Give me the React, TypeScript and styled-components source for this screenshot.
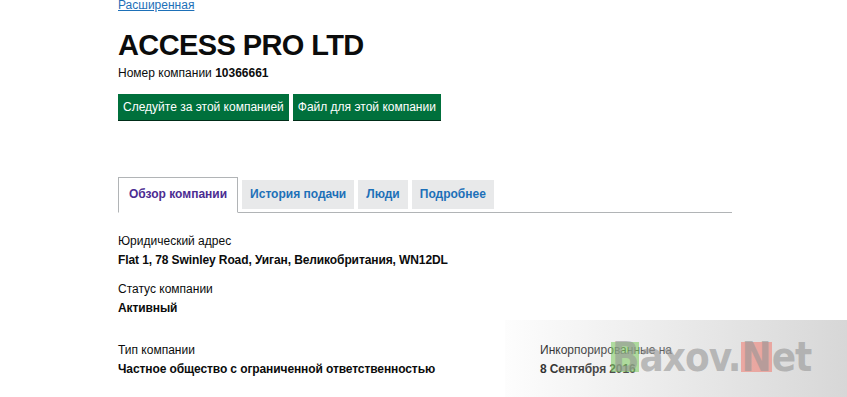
import { styled, createGlobalStyle } from "styled-components";

const GlobalStyle = createGlobalStyle`
  body {
    margin: 0;
    background: #fff;
    font-family: "Liberation Sans", Arial, sans-serif;
    color: #0b0c0c;
  }
`;

const Page = styled.div`
  position: relative;
  width: 847px;
  height: 397px;
  overflow: hidden;
`;

const Content = styled.div`
  width: 614px;
  padding-left: 118px;
`;

const TopLink = styled.a`
  display: block;
  margin-top: -2px;
  font-size: 12px;
  line-height: 14px;
  color: #1d70b8;
  text-decoration: underline;
`;

const Title = styled.h1`
  margin: 16px 0 0;
  font-size: 29px;
  line-height: 34px;
  font-weight: 700;
  letter-spacing: -0.6px;
`;

const CompanyNumber = styled.p`
  margin: 3px 0 0;
  font-size: 12px;
  line-height: 16px;
  strong {
    font-weight: 700;
  }
`;

const Actions = styled.div`
  display: flex;
  gap: 4px;
  margin-top: 13px;
`;

const GreenButton = styled.button`
  height: 26px;
  padding: 0 5px;
  border: 0;
  background: #00703c;
  box-shadow: 0 1px 0 #002d18;
  color: #fff;
  font-family: inherit;
  font-size: 12px;
`;

const Tabs = styled.div`
  display: flex;
  align-items: flex-end;
  gap: 4px;
  margin-top: 57px;
  border-bottom: 1px solid #b1b4b6;
`;

const Tab = styled.div<{ $active?: boolean }>`
  padding: ${(p) => (p.$active ? "9px 10px 10px" : "7px 8px")};
  margin-bottom: ${(p) => (p.$active ? "-1px" : "3px")};
  background: ${(p) => (p.$active ? "#fff" : "#e8e9ea")};
  border: ${(p) => (p.$active ? "1px solid #b1b4b6" : "0")};
  border-bottom: ${(p) => (p.$active ? "1px solid #fff" : "0")};
  color: ${(p) => (p.$active ? "#4c2c92" : "#1d70b8")};
  font-size: 12px;
  line-height: 15px;
  font-weight: 700;
  white-space: nowrap;
`;

const Details = styled.div`
  margin-top: 20px;
`;

const Row = styled.div<{ $gap?: number }>`
  display: grid;
  grid-template-columns: 422px 1fr;
  margin-top: ${(p) => p.$gap ?? 0}px;
`;

const Field = styled.div``;

const Label = styled.div`
  font-size: 12px;
  line-height: 16px;
`;

const Value = styled.div`
  margin-top: 3px;
  font-size: 12px;
  line-height: 16px;
  font-weight: 700;
  letter-spacing: -0.1px;
  white-space: nowrap;
`;

const Watermark = styled.div`
  position: absolute;
  left: 505px;
  top: 320px;
  width: 342px;
  height: 77px;
  background: linear-gradient(90deg, rgba(235, 235, 235, 0.1), rgba(205, 205, 205, 0.8));
  display: flex;
  align-items: center;
  padding-left: 106px;
  box-sizing: border-box;
`;

const MarkText = styled.div`
  display: flex;
  margin-top: -4px;
  font-family: "DejaVu Sans Condensed", "DejaVu Sans", sans-serif;
  font-weight: 700;
  font-size: 40px;
  line-height: 30px;
  color: rgba(150, 150, 150, 0.6);
  letter-spacing: -1px;
`;

const MarkLetter = styled.span<{ $bg: string }>`
  background: ${(p) => p.$bg};
  padding: 0 1px;
`;

export default function App() {
  return (
    <Page>
      <GlobalStyle />
      <Content>
        <TopLink href="#">Расширенная</TopLink>
        <Title>ACCESS PRO LTD</Title>
        <CompanyNumber>
          Номер компании <strong>10366661</strong>
        </CompanyNumber>
        <Actions>
          <GreenButton>Следуйте за этой компанией</GreenButton>
          <GreenButton>Файл для этой компании</GreenButton>
        </Actions>
        <Tabs>
          <Tab $active>Обзор компании</Tab>
          <Tab>История подачи</Tab>
          <Tab>Люди</Tab>
          <Tab>Подробнее</Tab>
        </Tabs>
        <Details>
          <Row>
            <Field>
              <Label>Юридический адрес</Label>
              <Value>Flat 1, 78 Swinley Road, Уиган, Великобритания, WN12DL</Value>
            </Field>
          </Row>
          <Row $gap={13}>
            <Field>
              <Label>Статус компании</Label>
              <Value>Активный</Value>
            </Field>
          </Row>
          <Row $gap={26}>
            <Field>
              <Label>Тип компании</Label>
              <Value>Частное общество с ограниченной ответственностью</Value>
            </Field>
            <Field>
              <Label>Инкорпорированные на</Label>
              <Value>8 Сентября 2016</Value>
            </Field>
          </Row>
        </Details>
      </Content>
      <Watermark>
        <MarkText>
          <MarkLetter $bg="rgba(120, 200, 90, 0.55)">B</MarkLetter>
          axov.
          <MarkLetter $bg="rgba(240, 120, 110, 0.55)">N</MarkLetter>
          et
        </MarkText>
      </Watermark>
    </Page>
  );
}
